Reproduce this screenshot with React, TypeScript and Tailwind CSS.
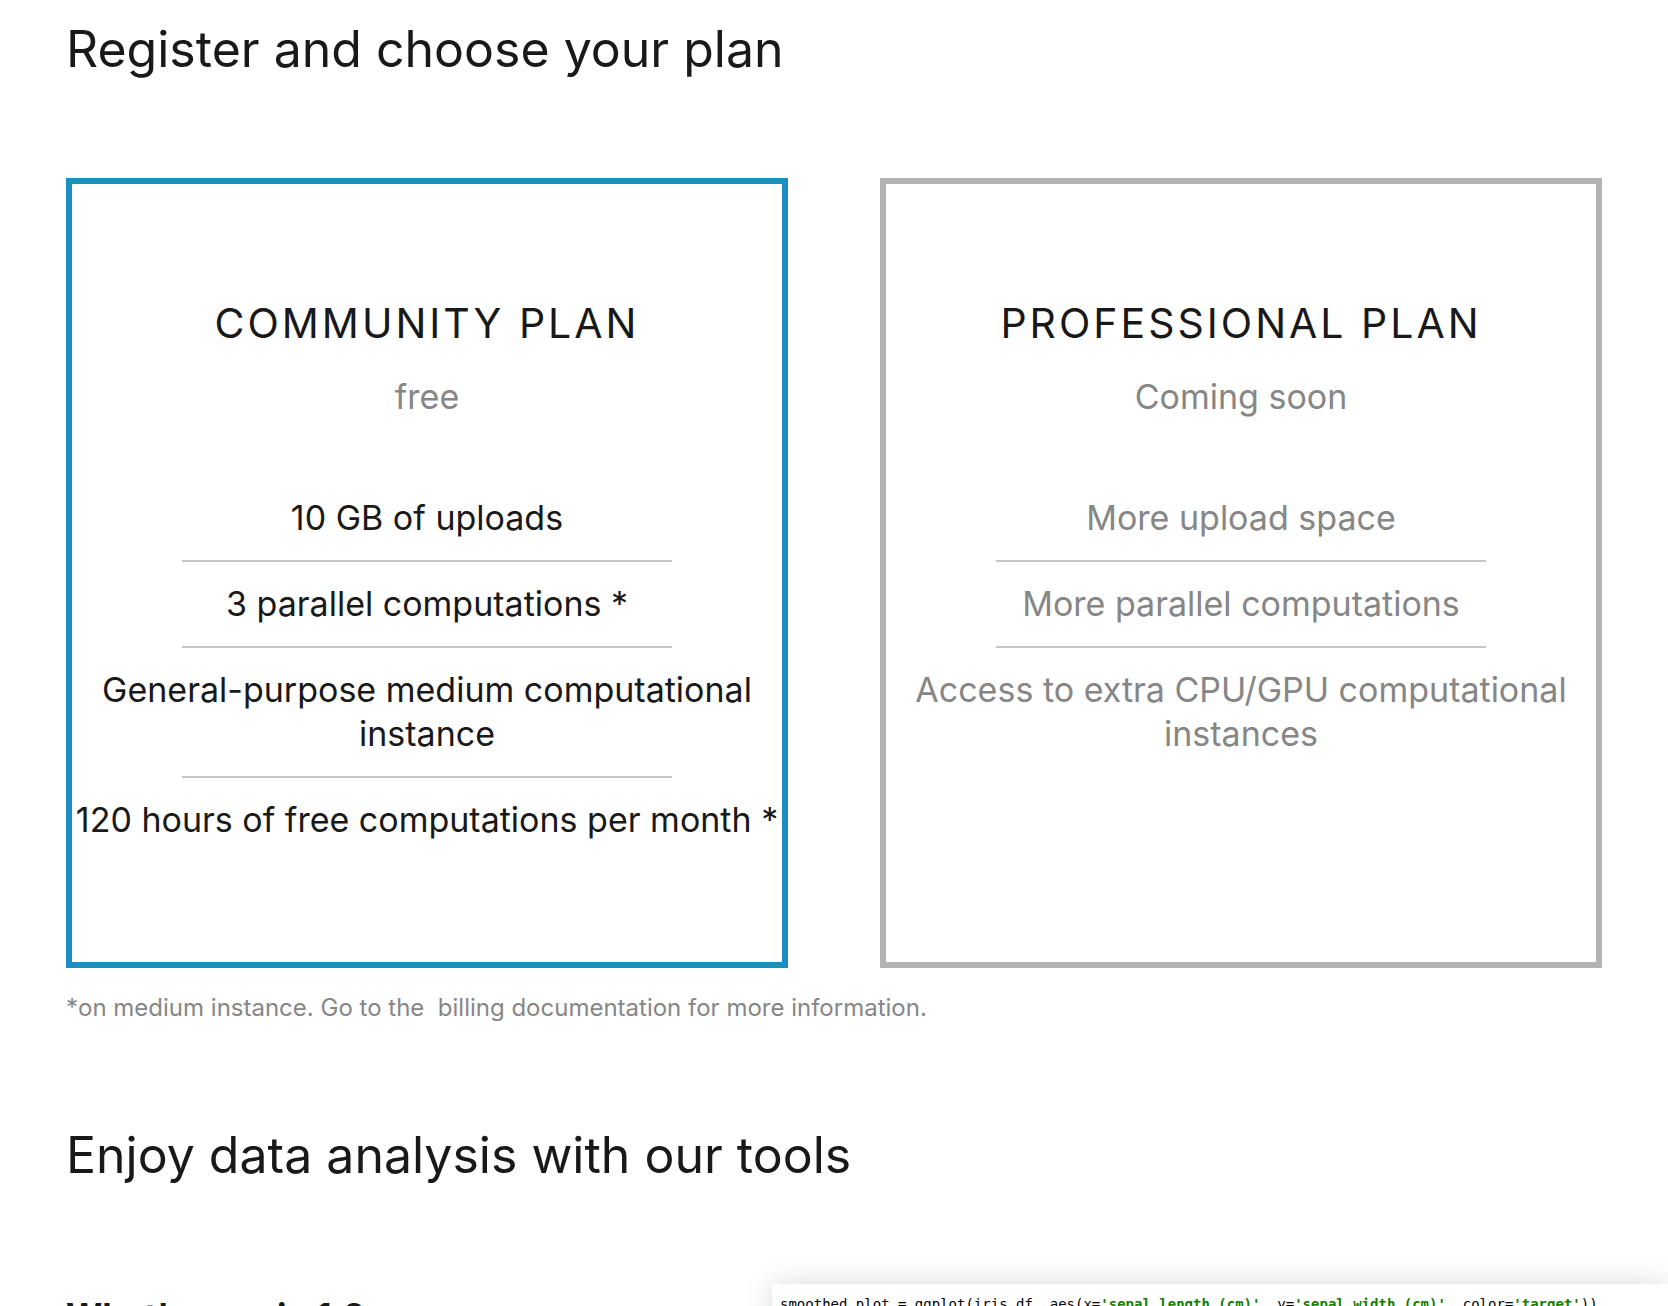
import type { ReactNode } from 'react';

type Plan = {
  title: string;
  price: string;
  features: string[];
  active: boolean;
};

const plans: Plan[] = [
  {
    title: 'COMMUNITY PLAN',
    price: 'free',
    features: [
      '10 GB of uploads',
      '3 parallel computations *',
      'General-purpose medium computational instance',
      '120 hours of free computations per month *',
    ],
    active: true,
  },
  {
    title: 'PROFESSIONAL PLAN',
    price: 'Coming soon',
    features: [
      'More upload space',
      'More parallel computations',
      'Access to extra CPU/GPU computational instances',
    ],
    active: false,
  },
];

function PlanCard({ plan }: { plan: Plan }) {
  return (
    <article
      className={`border-[6px] pt-[115px] pb-[100px] text-center ${plan.active ? 'border-[#1c8dc3]' : 'border-[#b3b3b3]'}`}
    >
      <h3 className="text-[41px] leading-[48px] tracking-[3px]">{plan.title}</h3>
      <p className="mt-7 text-[34px] leading-[44px] text-[#868686]">{plan.price}</p>
      <ul className={`mt-[57px] text-[34px] leading-[44px] ${plan.active ? '' : 'text-[#868686]'}`}>
        {plan.features.map((feature, i) => (
          <li key={feature}>
            {i > 0 && <hr className="mx-auto w-[69%] border-t-2 border-[#c6c6c6]" />}
            <p className="py-5">{feature}</p>
          </li>
        ))}
      </ul>
    </article>
  );
}

function Str({ children }: { children: ReactNode }) {
  return <span className="font-bold text-[#128000]">{children}</span>;
}

export default function App() {
  return (
    <main className="h-screen overflow-hidden bg-white px-[66px] pt-4 font-['Inter',sans-serif] text-[#191919]">
      <h2 className="text-[50px] leading-[66px]">Register and choose your plan</h2>
      <section className="mt-24 grid grid-cols-2 gap-[92px]">
        {plans.map((plan) => (
          <PlanCard key={plan.title} plan={plan} />
        ))}
      </section>
      <p className="mt-6 text-[24px] leading-8 text-[#868686]">
        *on medium instance. Go to the &nbsp;
        <a href="#billing">billing documentation</a> for more information.
      </p>
      <h2 className="mt-[98px] text-[50px] leading-[66px]">Enjoy data analysis with our tools</h2>
      <section className="-mr-[66px] mt-24 flex items-start">
        <h3 className="mt-2.5 w-[706px] shrink-0 text-[35px] leading-[44px] font-bold">What's new in 1.0</h3>
        <pre className="min-w-0 flex-1 bg-white px-2 pt-2.5 pb-10 font-['DejaVu_Sans_Mono',monospace] text-[14px] leading-5 text-black shadow-[0_0_30px_rgba(0,0,0,0.15)]">
          smoothed_plot = ggplot(iris_df, aes(x=<Str>'sepal length (cm)'</Str>, y=<Str>'sepal width (cm)'</Str>, color=<Str>'target'</Str>))
        </pre>
      </section>
    </main>
  );
}
